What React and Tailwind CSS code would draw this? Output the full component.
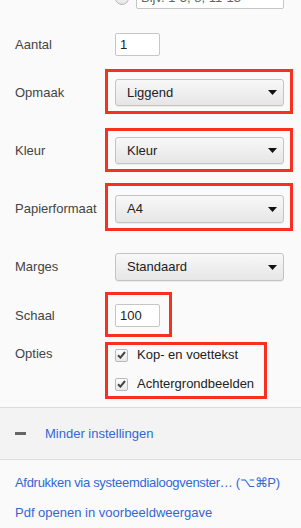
import React from "react";

const FONT = { fontFamily: '"Liberation Sans", Arial, sans-serif' };

function Mark({ t = -10, l = -10, r = -9, b = -8 }) {
  return (
    <div
      className="pointer-events-none absolute border-[3px] border-[#f7301f]"
      style={{ top: t, left: l, right: r, bottom: b }}
    />
  );
}

function Select({ value }) {
  return (
    <div className="flex h-full w-[169px] items-center justify-between rounded-[3px] border border-[#c4c4c4] bg-gradient-to-b from-[#f8f8f8] to-[#e6e6e6] pl-[11px] pr-[6px] text-[13px] text-[#222] shadow-[0_1px_0_rgba(0,0,0,0.06)]">
      <span>{value}</span>
      <svg width="9" height="5" viewBox="0 0 9 5">
        <path d="M0 0 H9 L4.5 5 Z" fill="#111" />
      </svg>
    </div>
  );
}

function Check({ label }) {
  return (
    <div className="flex h-[18px] items-center">
      <div className="flex h-[13px] w-[13px] items-center justify-center rounded-[2px] border border-[#b9b9b9] bg-gradient-to-b from-[#fdfdfd] to-[#e8e8e8]">
        <svg width="9" height="8" viewBox="0 0 9 8">
          <path d="M1 4.2 L3.4 6.6 L8 1" stroke="#444" strokeWidth="2" fill="none" />
        </svg>
      </div>
      <span className="ml-[9px] text-[13px] text-[#222]">{label}</span>
    </div>
  );
}

function Row({ label, children, className = "" }) {
  return (
    <div className={"flex items-center " + className}>
      <div className="w-[115px] pl-[15px] text-[13px] text-[#444]">{label}</div>
      {children}
    </div>
  );
}

export default function App() {
  return (
    <div className="h-[528px] w-[301px] overflow-hidden bg-[#fafafa]" style={FONT}>
      {/* partially visible page-range row */}
      <div className="mt-[-14px] flex h-[23px] items-center">
        <div className="w-[115px]" />
        <div className="h-[14px] w-[14px] rounded-full border border-[#b5b5b5] bg-gradient-to-b from-[#fdfdfd] to-[#e6e6e6]" />
        <div className="ml-[7px] flex h-full w-[148px] items-center rounded-[2px] border border-[#c6c6c6] bg-white pl-[4px] text-[13px] text-[#666]">
          Bijv. 1-5, 8, 11-13
        </div>
      </div>

      <Row label="Aantal" className="mt-[24px] h-[23px]">
        <div className="flex h-full w-[45px] items-center rounded-[2px] border border-[#c6c6c6] bg-white pl-[4px] text-[13px] text-[#222]">
          1
        </div>
      </Row>

      <Row label="Opmaak" className="mt-[23px] h-[27px]">
        <div className="relative h-full">
          <Select value="Liggend" />
          <Mark t={-10} b={-8} />
        </div>
      </Row>

      <Row label="Kleur" className="mt-[31px] h-[27px]">
        <div className="relative h-full">
          <Select value="Kleur" />
          <Mark t={-9} b={-8} />
        </div>
      </Row>

      <Row label="Papierformaat" className="mt-[31px] h-[28px]">
        <div className="relative h-full">
          <Select value="A4" />
          <Mark t={-12} b={-8} />
        </div>
      </Row>

      <Row label="Marges" className="mt-[30px] h-[28px]">
        <Select value="Standaard" />
      </Row>

      <Row label="Schaal" className="mt-[23px] h-[23px]">
        <div className="relative h-full">
          <div className="flex h-full w-[45px] items-center rounded-[2px] border border-[#c6c6c6] bg-white pl-[4px] text-[13px] text-[#222]">
            100
          </div>
          <Mark t={-12} b={-10} l={-10} r={-12} />
        </div>
      </Row>

      <div className="mt-[19px] flex items-start">
        <div className="w-[115px] pl-[15px] text-[13px] leading-[15px] text-[#444]">Opties</div>
        <div className="relative flex flex-col gap-[11px]">
          <Check label="Kop- en voettekst" />
          <Check label="Achtergrondbeelden" />
          <Mark t={-4} b={-6} l={-10} r={-13} />
        </div>
      </div>

      <div className="mt-[14px] flex h-[53px] items-center border-y border-[#dcdcdc] bg-[#f3f3f3]">
        <div className="ml-[15px] h-[3px] w-[11px] bg-[#666]" />
        <span className="ml-[19px] text-[13px] text-[#3367d6]">Minder instellingen</span>
      </div>

      <div className="mt-[15px] whitespace-nowrap pl-[15px] text-[13px] leading-[16px] tracking-[-0.3px] text-[#3367d6]">
        Afdrukken via systeemdialoogvenster… (⌥⌘P)
      </div>
      <div className="mt-[14px] pl-[15px] text-[13px] leading-[16px] text-[#3367d6]">
        Pdf openen in voorbeeldweergave
      </div>
    </div>
  );
}
